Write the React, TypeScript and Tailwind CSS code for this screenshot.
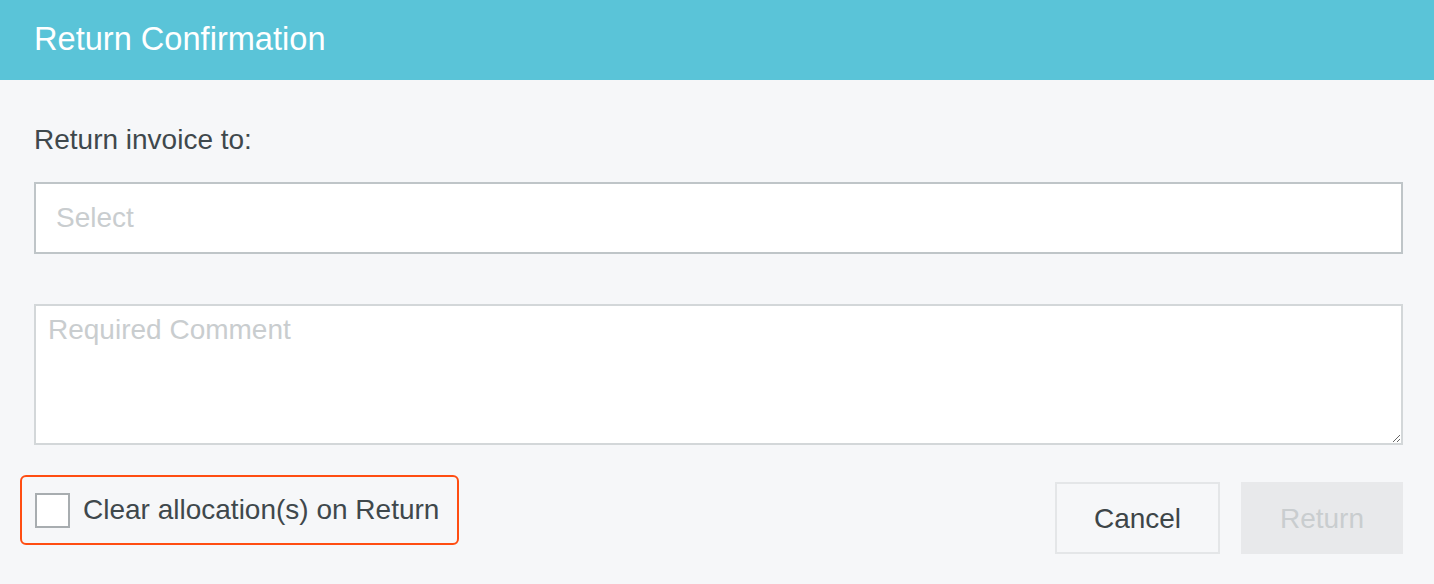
export default function App() {
  return (
    <div
      className="min-h-screen bg-[#f6f7f9] text-[#3f484c]"
      style={{ fontFamily: '"Liberation Sans", Arial, sans-serif' }}
    >
      {/* Header */}
      <header className="h-[80px] bg-[#5ac4d8] px-[34px] flex items-center">
        <h1 className="text-[32.6px] leading-none text-white pb-[2px]">Return Confirmation</h1>
      </header>

      <div className="pl-[34px] pr-[31px] pt-[42px]">
        <label className="block text-[28px] leading-[36px] text-[#3f484c]">Return invoice to:</label>

        <input
          type="text"
          placeholder="Select"
          className="mt-[24px] block w-full h-[72px] border-2 border-[#bfc5c8] bg-white px-[20px] text-[28px] text-[#3f484c] placeholder:text-[#c9cdcf] outline-none"
        />

        <textarea
          placeholder="Required Comment"
          className="mt-[50px] block w-full h-[141px] border-2 border-[#d3d7d9] bg-white px-[12px] pt-[7px] text-[28px] leading-[34px] text-[#3f484c] placeholder:text-[#c9cdcf] outline-none"
        />

        <div className="mt-[30px] flex items-start justify-between">
          <label className="-ml-[14px] flex h-[70px] items-center gap-[13px] rounded-[6px] border-2 border-[#ff4d12] pl-[13px] pr-[18px]">
            <span className="block h-[35px] w-[35px] border-2 border-[#a8adb0] bg-white" />
            <span className="text-[28px] leading-none text-[#3f484c]">Clear allocation(s) on Return</span>
          </label>

          <div className="mt-[7px] flex gap-[21px]">
            <button className="h-[72px] w-[165px] border-2 border-[#e4e6e8] pt-[2px] text-[28px] text-[#3d4548]">
              Cancel
            </button>
            <button className="h-[72px] w-[162px] bg-[#e8e9eb] pt-[2px] text-[28px] text-[#c9cdcf]" disabled>
              Return
            </button>
          </div>
        </div>
      </div>
    </div>
  )
}
